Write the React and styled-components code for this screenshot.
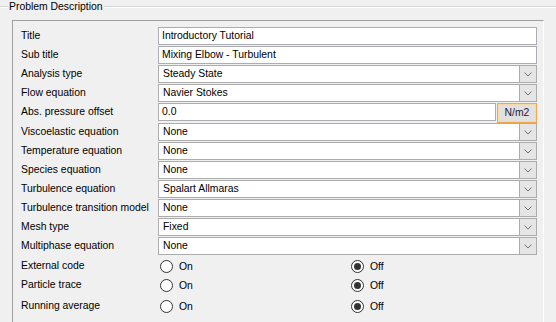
import styled, { createGlobalStyle } from 'styled-components'

const GlobalStyle = createGlobalStyle`
  html, body {
    margin: 0;
    padding: 0;
    background: #f0f0f0;
  }
  body {
    font-family: "Liberation Sans", Arial, sans-serif;
    font-size: 10.4px;
    color: #000;
  }
`

const Page = styled.div`
  width: 556px;
  height: 322px;
  overflow: hidden;
  background: #f0f0f0;
`

const GroupBox = styled.div`
  position: relative;
  margin-top: 6px;
  border-top: 1px solid #d5d5d5;
  box-shadow: inset 0 1px 0 #ffffff;
  padding: 13px 0 0 12px;
  height: 302px;
`

const Legend = styled.span`
  position: absolute;
  left: 8px;
  top: -7px;
  padding: 0 1px;
  background: #f0f0f0;
  line-height: 13px;
  color: #000;
`

const Panel = styled.div`
  width: 532px;
  height: 100%;
  border-left: 1px solid #a0a0a0;
  border-top: 1px solid #a0a0a0;
  border-right: 1px solid #ffffff;
  padding: 6px 6px 0 8px;
  box-sizing: border-box;
`

const Row = styled.div`
  display: grid;
  grid-template-columns: 137px 1fr;
  align-items: start;
  height: ${p => p.$h || 19}px;
`

const Label = styled.div`
  line-height: 18px;
  white-space: nowrap;
  padding-top: ${p => p.$pt || 0}px;
`

const TextBox = styled.div`
  height: 18px;
  box-sizing: border-box;
  border: 1px solid #abadb3;
  background: #fff;
  padding-left: 3px;
  line-height: 16px;
  white-space: nowrap;
  overflow: hidden;
`

const Combo = styled.div`
  display: flex;
  height: 18px;
  box-sizing: border-box;
  border: 1px solid #acacac;
  background: #fff;
`

const ComboText = styled.div`
  flex: 1;
  padding-left: 4px;
  line-height: 16px;
  white-space: nowrap;
`

const DropButton = styled.div`
  width: 16px;
  display: flex;
  align-items: center;
  justify-content: center;
  background: #e5e5e5;
  border-left: 1px solid #acacac;
`

const UnitField = styled.div`
  display: grid;
  grid-template-columns: 1fr 40px;
  gap: 1px;
  align-items: start;
`

const UnitButton = styled.div`
  height: 20px;
  box-sizing: border-box;
  border: 1px solid #f0a848;
  background: #e1e1e1;
  box-shadow: inset 0 0 0 1px #f7d9a8;
  color: #1a1a3c;
  text-align: center;
  line-height: 18px;
`

const RadioGroup = styled.div`
  display: grid;
  grid-template-columns: 191px 1fr;
  padding-left: 2px;
  padding-top: ${p => p.$pt || 0}px;
`

const RadioOption = styled.label`
  display: flex;
  align-items: center;
  gap: 6px;
  height: 18px;
`

const RadioCircle = styled.span`
  width: 13px;
  height: 13px;
  box-sizing: border-box;
  border-radius: 50%;
  border: 1px solid #333;
  background: #fff;
  display: flex;
  align-items: center;
  justify-content: center;
  &::after {
    content: '';
    width: 7px;
    height: 7px;
    border-radius: 50%;
    background: ${p => (p.$checked ? '#333' : 'transparent')};
  }
`

const Chevron = () => (
  <svg width="8" height="5" viewBox="0 0 8 5">
    <polyline points="0.5,0.5 4,4 7.5,0.5" fill="none" stroke="#707070" strokeWidth="1" />
  </svg>
)

const Select = ({ value }) => (
  <Combo>
    <ComboText>{value}</ComboText>
    <DropButton>
      <Chevron />
    </DropButton>
  </Combo>
)

const Radio = ({ checked, children }) => (
  <RadioOption>
    <RadioCircle $checked={checked} />
    {children}
  </RadioOption>
)

const selects = [
  ['Viscoelastic equation', 'None'],
  ['Temperature equation', 'None'],
  ['Species equation', 'None'],
  ['Turbulence equation', 'Spalart Allmaras'],
  ['Turbulence transition model', 'None'],
  ['Mesh type', 'Fixed'],
  ['Multiphase equation', 'None'],
]

// label, row height, top offset
const toggles = [
  ['External code', 19, 1],
  ['Particle trace', 20, 1],
  ['Running average', 20, 2],
]

const App = () => {
  return (
    <Page>
      <GlobalStyle />
      <GroupBox>
        <Legend>Problem Description</Legend>
        <Panel>
          <Row>
            <Label>Title</Label>
            <TextBox>Introductory Tutorial</TextBox>
          </Row>
          <Row>
            <Label>Sub title</Label>
            <TextBox>Mixing Elbow - Turbulent</TextBox>
          </Row>
          <Row>
            <Label>Analysis type</Label>
            <Select value="Steady State" />
          </Row>
          <Row>
            <Label>Flow equation</Label>
            <Select value="Navier Stokes" />
          </Row>
          <Row $h={20}>
            <Label>Abs. pressure offset</Label>
            <UnitField>
              <TextBox>0.0</TextBox>
              <UnitButton>N/m2</UnitButton>
            </UnitField>
          </Row>
          {selects.map(([label, value]) => (
            <Row key={label}>
              <Label>{label}</Label>
              <Select value={value} />
            </Row>
          ))}
          {toggles.map(([label, h, pt]) => (
            <Row key={label} $h={h}>
              <Label $pt={pt}>{label}</Label>
              <RadioGroup $pt={pt}>
                <Radio>On</Radio>
                <Radio checked>Off</Radio>
              </RadioGroup>
            </Row>
          ))}
        </Panel>
      </GroupBox>
    </Page>
  )
}

export default App
